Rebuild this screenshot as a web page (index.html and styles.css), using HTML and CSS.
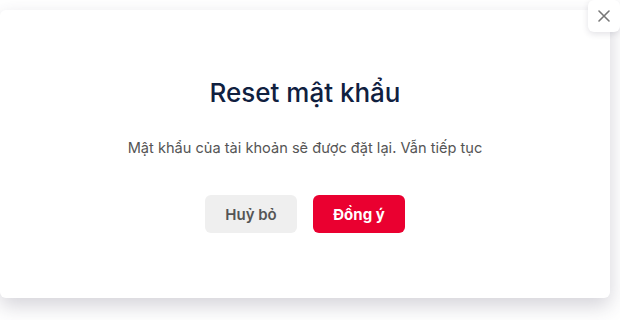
FILE: index.html
```html
<!DOCTYPE html>
<html lang="vi">
<head>
    <meta charset="UTF-8">
    <title>Reset mật khẩu</title>
    <link rel="stylesheet" href="styles.css">
</head>
<body>
    <div class="modal">
        <h1 class="modal-title">Reset mật khẩu</h1>
        <p class="modal-text">Mật khẩu của tài khoản sẽ được đặt lại. Vẫn tiếp tục</p>
        <div class="modal-actions">
            <button class="btn btn-cancel">Huỷ bỏ</button>
            <button class="btn btn-confirm">Đồng ý</button>
        </div>
    </div>

    <button class="close-btn" aria-label="Đóng">
        <svg width="12" height="12" viewBox="0 0 12 12">
            <path d="M1 1L11 11M11 1L1 11" stroke="#777" stroke-width="1.6" stroke-linecap="round"/>
        </svg>
    </button>
</body>
</html>
```

FILE: styles.css
```css
* {
    margin: 0;
    padding: 0;
    box-sizing: border-box;
    font-family: 'Inter', 'Noto Sans', sans-serif;
}

body {
    background-color: #fff;
    width: 620px;
    height: 320px;
    overflow: hidden;
    padding-top: 10px;
}

.modal {
    width: 610px;
    height: 288px;
    background-color: #fff;
    border-radius: 6px;
    box-shadow: 0 8px 20px rgba(60, 55, 80, 0.22);
    display: flex;
    flex-direction: column;
    align-items: center;
    padding-top: 67px;
}

.modal-title {
    font-size: 26px;
    font-weight: 500;
    color: #10203f;
    line-height: 32px;
}

.modal-text {
    margin-top: 29px;
    font-size: 14.6px;
    color: #555;
    line-height: 20px;
}

.modal-actions {
    display: flex;
    gap: 16px;
    margin-top: 37px;
}

.btn {
    width: 92px;
    height: 38px;
    border: none;
    border-radius: 6px;
    font-size: 15px;
    font-weight: 600;
    cursor: pointer;
}

.btn-cancel {
    background-color: #efefef;
    color: #555;
}

.btn-confirm {
    background-color: #ea0030;
    color: #fff;
    font-weight: 700;
}

.close-btn {
    position: absolute;
    top: 0;
    right: 0;
    width: 32px;
    height: 32px;
    border: none;
    border-radius: 6px;
    background-color: #fff;
    box-shadow: 0 2px 6px rgba(60, 55, 80, 0.15);
    display: flex;
    align-items: center;
    justify-content: center;
    cursor: pointer;
}
```
